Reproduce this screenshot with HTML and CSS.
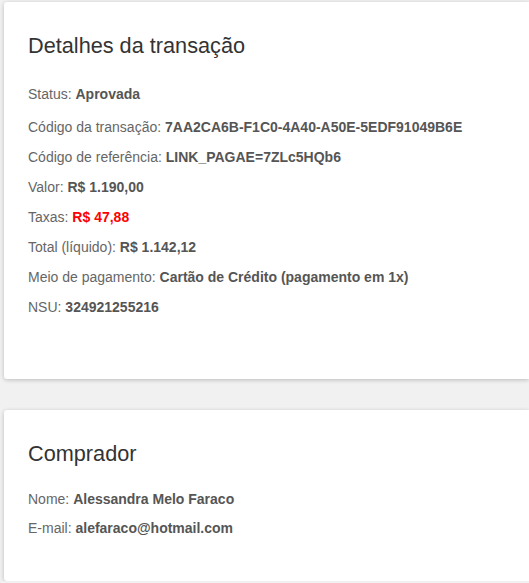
FILE: index.html
```html
<!DOCTYPE html>
<html lang="pt-BR">
<head>
<meta charset="utf-8">
<title>Detalhes da transação</title>
<link rel="stylesheet" href="styles.css">
</head>
<body>
<main class="page">
  <section class="card card-details">
    <h2 class="card-title">Detalhes da transação</h2>
    <ul class="info-list">
      <li class="info-row info-status">Status: <strong class="value">Aprovada</strong></li>
      <li class="info-row">Código da transação: <strong class="value">7AA2CA6B-F1C0-4A40-A50E-5EDF91049B6E</strong></li>
      <li class="info-row">Código de referência: <strong class="value">LINK_PAGAE=7ZLc5HQb6</strong></li>
      <li class="info-row">Valor: <strong class="value">R$ 1.190,00</strong></li>
      <li class="info-row">Taxas: <strong class="value value-red">R$ 47,88</strong></li>
      <li class="info-row">Total (líquido): <strong class="value">R$ 1.142,12</strong></li>
      <li class="info-row">Meio de pagamento: <strong class="value">Cartão de Crédito (pagamento em 1x)</strong></li>
      <li class="info-row">NSU: <strong class="value">324921255216</strong></li>
    </ul>
  </section>
  <section class="card card-buyer">
    <h2 class="card-title">Comprador</h2>
    <ul class="info-list info-list-buyer">
      <li class="info-row">Nome: <strong class="value">Alessandra Melo Faraco</strong></li>
      <li class="info-row">E-mail: <strong class="value">alefaraco@hotmail.com</strong></li>
    </ul>
  </section>
</main>
</body>
</html>
```
FILE: styles.css
```css
html, body {
  margin: 0;
  padding: 0;
}
body {
  background: #f1f1f1;
  font-family: "Liberation Sans", Arial, sans-serif;
  overflow: hidden;
}
.page {
  display: flex;
  flex-direction: column;
  gap: 31px;
  padding: 2px 0 0 4px;
}
.card {
  box-sizing: border-box;
  background: #fff;
  border-radius: 3px 0 0 3px;
  box-shadow: 0 1px 4px rgba(0, 0, 0, 0.22);
  padding: 31px 24px 0 24px;
}
.card-details {
  height: 377px;
}
.card-buyer {
  height: 171px;
}
.card-title {
  margin: 0;
  font-size: 21.7px;
  line-height: 26px;
  font-weight: normal;
  color: #333;
}
.info-list {
  list-style: none;
  margin: 27px 0 0 0;
  padding: 0;
  display: flex;
  flex-direction: column;
  gap: 14px;
}
.info-list-buyer {
  margin-top: 24px;
  gap: 13px;
}
.info-row {
  font-size: 14px;
  line-height: 16px;
  color: #666;
}
.info-status {
  margin-bottom: 3px;
}
.value {
  font-weight: bold;
  color: #555;
}
.value-red {
  color: #ff0000;
}
```
